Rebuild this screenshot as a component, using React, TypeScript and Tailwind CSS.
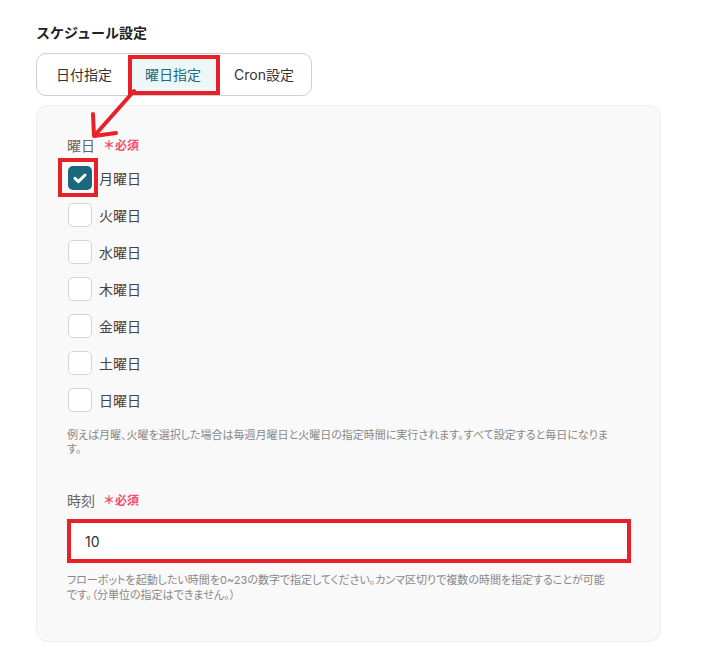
import React from "react";

const days = ["月曜日", "火曜日", "水曜日", "木曜日", "金曜日", "土曜日", "日曜日"];

function Required() {
  return (
    <span className="ml-[8px] text-[12px] font-bold text-[#f0506e]">＊必須</span>
  );
}

export default function App() {
  return (
    <div className="relative w-[705px] h-[666px] bg-white font-['Inter','Noto_Sans_CJK_JP',sans-serif] text-[#333]">
      <div className="pl-[36px] pt-[23px]">
        <h2 className="text-[14px] leading-[20px] font-bold text-[#222]">スケジュール設定</h2>
        <div className="mt-[10px] inline-flex rounded-[10px] border border-[#cfcfcf] p-[3px]">
          <div className="h-[35px] pl-[16px] pr-[17px] flex items-center text-[14px] text-[#333]">日付指定</div>
          <div className="h-[35px] px-[16px] flex items-center text-[14px] text-[#1c6a80] bg-[#eef7f8] rounded-[6px]">曜日指定</div>
          <div className="h-[35px] pl-[17px] pr-[14px] flex items-center text-[14px] text-[#333]">Cron設定</div>
        </div>
        <div className="mt-[9px] w-[625px] rounded-[12px] border border-[#eeeeee] bg-[#f9f9f9] pl-[30px] pr-[29px] pt-[30px] pb-[38px]">
          <div className="flex items-center text-[14px] leading-[20px] text-[#666]">
            曜日<Required />
          </div>
          <div className="mt-[10px] flex flex-col gap-[13px]">
            {days.map((d, i) => (
              <div key={d} className="flex items-center h-[24px]">
                <div className="relative ml-[1px]">
                  {i === 0 ? (
                    <div className="w-[24px] h-[24px] rounded-[5px] bg-[#1b677d] flex items-center justify-center">
                      <svg width="18" height="18" viewBox="0 0 18 18" fill="none">
                        <path d="M4 9.4l3.4 3.2 6.6-6.6" stroke="white" strokeWidth="3" strokeLinecap="round" strokeLinejoin="round" />
                      </svg>
                    </div>
                  ) : (
                    <div className="w-[24px] h-[24px] rounded-[5px] bg-white border border-[#d4d4d4]" />
                  )}
                  {i === 0 && (
                    <div className="absolute left-[-10px] top-[-8px] w-[40px] h-[39px] border-[4px] border-[#e8202a]" />
                  )}
                </div>
                <span className="ml-[7px] text-[14px] text-[#444]">{d}</span>
              </div>
            ))}
          </div>
          <p className="mt-[16px] text-[11px] leading-[14px] text-[#888] [font-feature-settings:'palt']">
            <span className="block whitespace-nowrap">例えば月曜、火曜を選択した場合は毎週月曜日と火曜日の指定時間に実行されます。すべて設定すると毎日になりま</span>
            <span className="block whitespace-nowrap">す。</span>
          </p>
          <div className="mt-[35px] flex items-center text-[14px] leading-[20px] text-[#666]">
            時刻<Required />
          </div>
          <div className="mt-[8px] h-[44px] border-[4px] border-[#e8202a] bg-white flex items-center pl-[14px] text-[14px] text-[#333]">
            10
          </div>
          <p className="mt-[10px] text-[11px] leading-[15px] text-[#888] [font-feature-settings:'palt']">
            <span className="block whitespace-nowrap">フローボットを起動したい時間を0~23の数字で指定してください。カンマ区切りで複数の時間を指定することが可能</span>
            <span className="block whitespace-nowrap">です。（分単位の指定はできません。）</span>
          </p>
        </div>
      </div>

      {/* annotation: red box around active tab */}
      <div className="absolute left-[128px] top-[55px] w-[92px] h-[40px] border-[4px] border-[#e8202a]" />
      {/* annotation: arrow */}
      <svg className="absolute left-0 top-0" width="705" height="666" viewBox="0 0 705 666" fill="none">
        <path d="M134 91 L95 135" stroke="#e8202a" strokeWidth="4" strokeLinecap="round" />
        <path d="M93 114 L94 136 L116 133" stroke="#e8202a" strokeWidth="4" strokeLinecap="round" strokeLinejoin="round" />
      </svg>
    </div>
  );
}
